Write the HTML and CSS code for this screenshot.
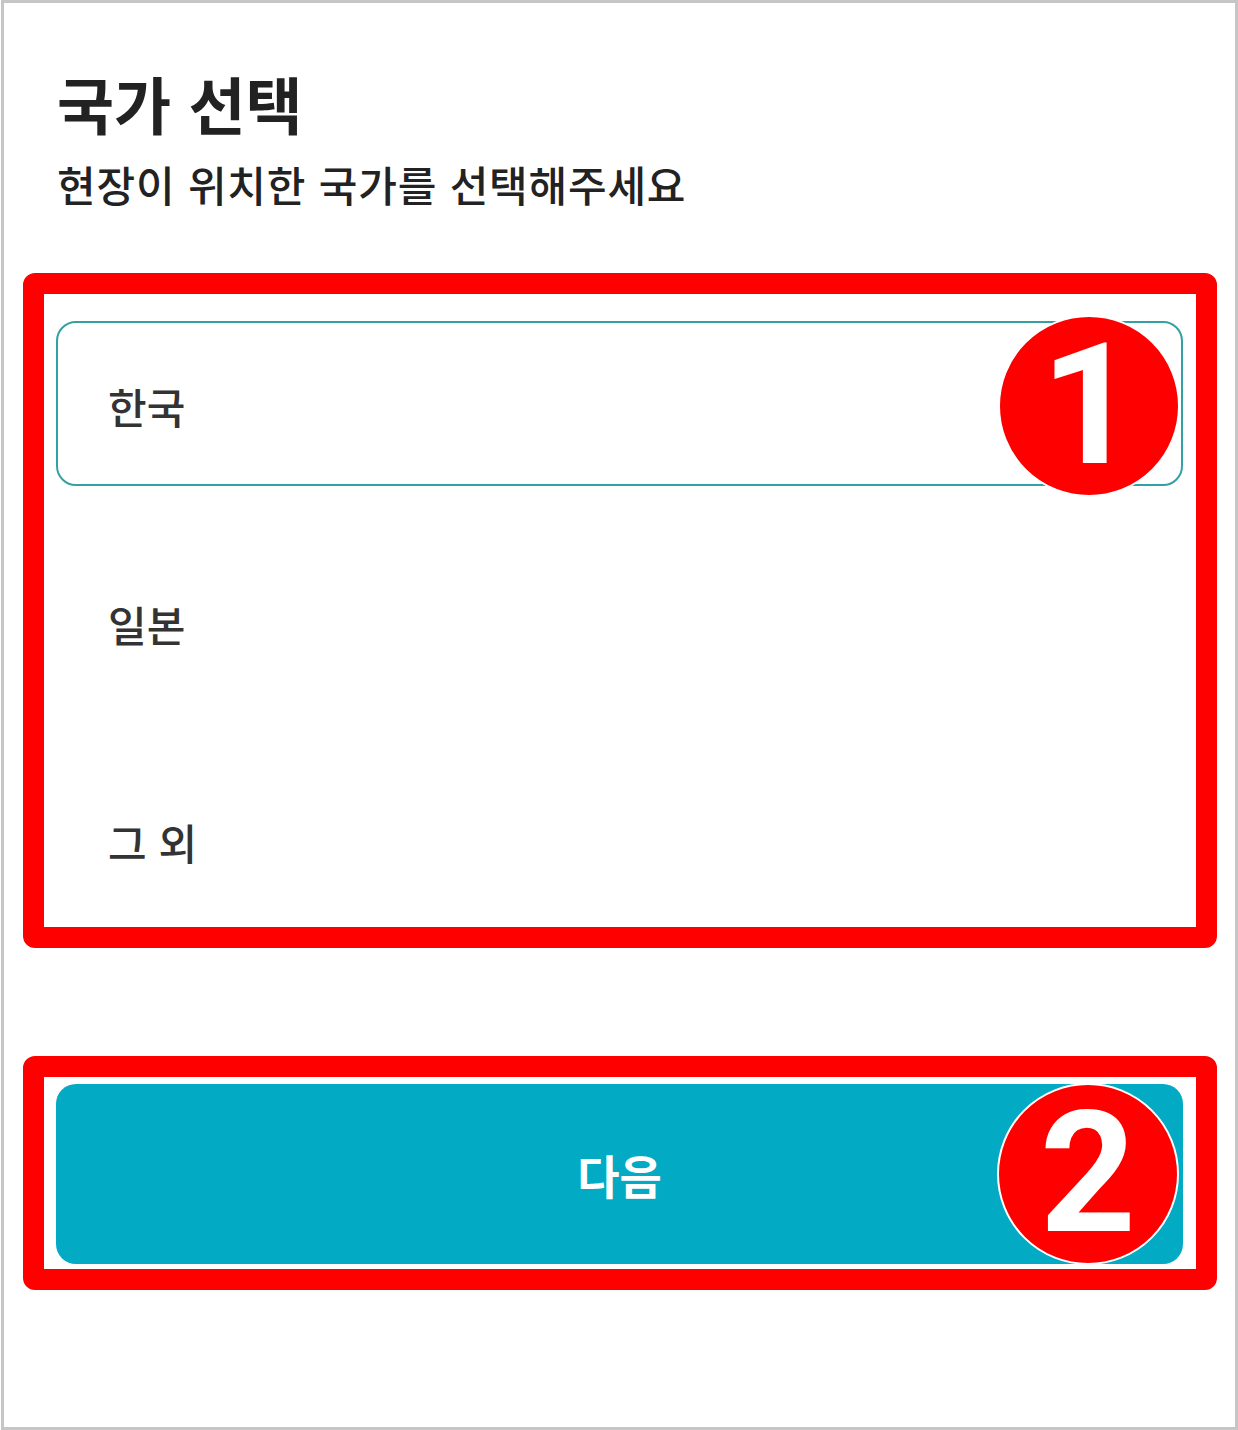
FILE: index.html
```html
<!DOCTYPE html>
<html lang="ko">
<head>
<meta charset="utf-8">
<title>국가 선택</title>
<link rel="stylesheet" href="styles.css">
</head>
<body>
<div class="screen">
  <header class="intro">
    <h1 class="title">국가 선택</h1>
    <p class="subtitle">현장이 위치한 국가를 선택해주세요</p>
  </header>

  <section class="callout callout-list">
    <ul class="options">
      <li class="option is-selected">한국</li>
      <li class="option">일본</li>
      <li class="option">그 외</li>
    </ul>
    <span class="step-badge step-badge-1">1</span>
  </section>

  <section class="callout callout-action">
    <button class="next-btn" type="button">다음</button>
    <span class="step-badge step-badge-2">2</span>
  </section>
</div>
</body>
</html>
```

FILE: styles.css
```css
* {
  box-sizing: border-box;
}

html, body {
  margin: 0;
  padding: 0;
  background: #ffffff;
}

body {
  font-family: "Noto Sans CJK KR", "Noto Sans", sans-serif;
  color: #222222;
}

.screen {
  width: 1237px;
  height: 1430px;
  margin-left: 1px;
  border: 3px solid #c6c6c6;
  display: flex;
  flex-direction: column;
  padding-top: 58px;
}

.intro {
  padding-left: 53px;
}

.title {
  margin: 0;
  font-size: 62px;
  font-weight: 700;
  line-height: 84px;
  color: #222222;
  letter-spacing: 0;
}

.subtitle {
  margin: 10px 0 0;
  font-size: 42px;
  font-weight: 500;
  line-height: 58px;
  color: #222222;
  letter-spacing: 0.8px;
}

/* red annotation frames */
.callout {
  position: relative;
  margin-left: 19px;
  width: 1194px;
  border: 21px solid #ff0000;
  border-radius: 12px;
  padding: 0 13px 0 12px;
}

.callout-list {
  margin-top: 60px;
  padding-top: 27px;
  padding-bottom: 5px;
}

.callout-action {
  margin-top: 108px;
  padding-top: 7px;
  padding-bottom: 5px;
}

.options {
  list-style: none;
  margin: 0;
  padding: 0;
  display: flex;
  flex-direction: column;
  gap: 53px;
}

.option {
  height: 165px;
  display: flex;
  align-items: center;
  padding-left: 50px;
  border: 2.5px solid transparent;
  border-radius: 20px;
  font-size: 42px;
  font-weight: 500;
  color: #333333;
  padding-top: 4px;
}

.option.is-selected {
  border-color: #34a0a3;
}

.next-btn {
  display: block;
  width: 100%;
  height: 180px;
  border: 0;
  border-radius: 20px;
  background: #02aac3;
  color: #ffffff;
  font-family: "Noto Sans CJK KR", "Noto Sans", sans-serif;
  font-size: 46px;
  font-weight: 700;
  padding: 0;
}

/* numbered step markers overlaid on the frames */
.step-badge {
  position: absolute;
  width: 182px;
  height: 182px;
  border-radius: 50%;
  background: #ff0000;
  border: 2px solid #ffffff;
  color: #ffffff;
  font-family: Roboto, "Liberation Sans", Arial, sans-serif;
  font-weight: 700;
  font-size: 168px;
  line-height: 1;
  display: flex;
  align-items: center;
  justify-content: center;
}

.step-badge-1 {
  left: 954px;
  top: 21px;
}

.step-badge-2 {
  left: 953px;
  top: 6px;
}
```
